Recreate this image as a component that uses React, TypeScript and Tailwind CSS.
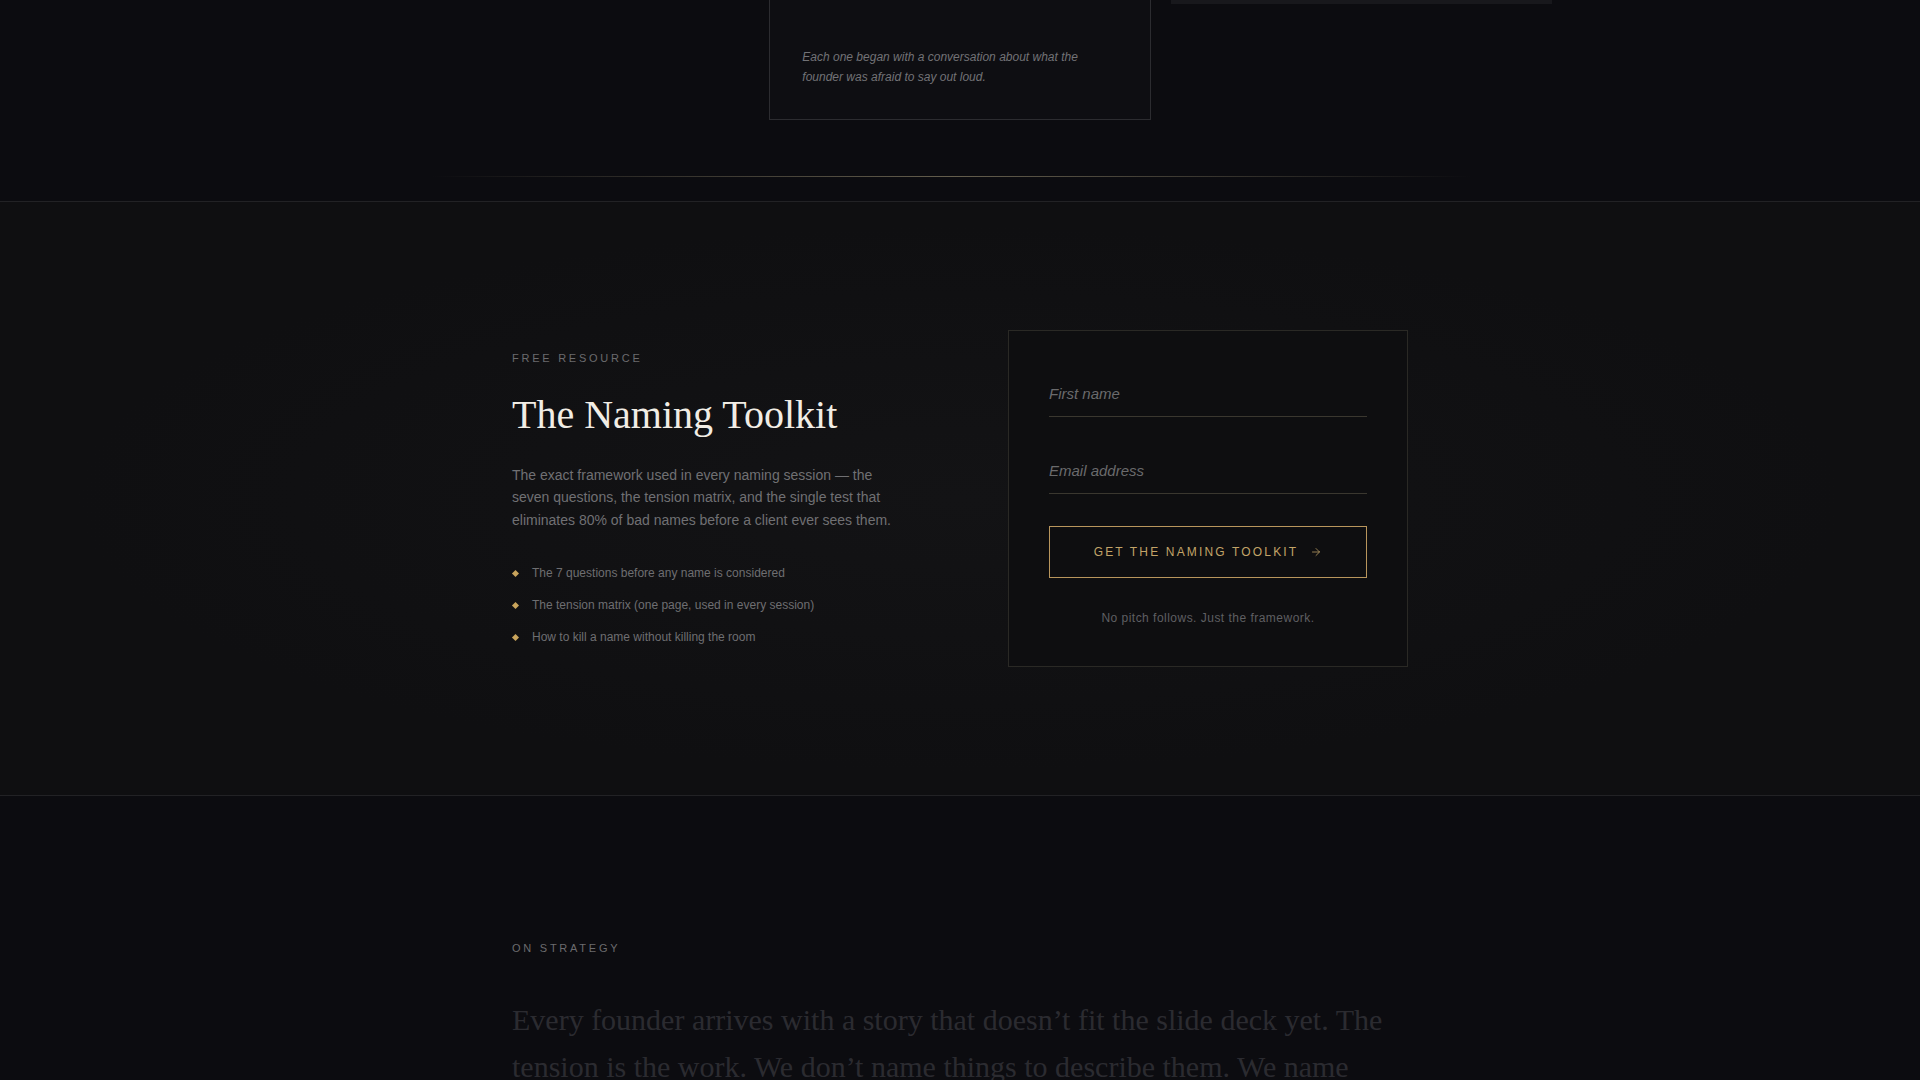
import { ArrowRight } from 'lucide-react';

const toolkitPoints = [
  'The 7 questions before any name is considered',
  'The tension matrix (one page, used in every session)',
  'How to kill a name without killing the room',
];

function Eyebrow({ children }: { children: string }) {
  return (
    <p className="text-[11px] leading-4 uppercase tracking-[0.25em] text-[#6b6b6e]">
      {children}
    </p>
  );
}

function UnderlineInput({ placeholder, type = 'text' }: { placeholder: string; type?: string }) {
  return (
    <input
      type={type}
      placeholder={placeholder}
      className="w-full border-b border-[#3a372f] bg-transparent py-3 text-[15px] leading-5 text-[#ddd8cc] outline-none placeholder:italic placeholder:text-[#6a6a6c]"
    />
  );
}

export default function App() {
  return (
    <div className="min-h-screen bg-[#0c0c10] font-['Liberation_Sans',Arial,sans-serif] text-[#ddd8cc]">
      {/* tail end of the work grid */}
      <section className="px-6 pb-6">
        <div className="mx-auto grid max-w-[1184px] grid-cols-3 gap-5">
          <div />
          <div className="border-x border-b border-[#2c2c30] bg-[#0e0e12] px-8 pb-[32px] pt-[47px]">
            <p className="text-[12px] italic leading-5 text-[#727276]">
              Each one began with a conversation about what the founder was afraid to say out loud.
            </p>
          </div>
          <div>
            <div className="h-1 bg-[#18181c]" />
          </div>
        </div>
        <div className="mx-auto mt-[56px] h-px max-w-[1040px] -translate-x-2 bg-gradient-to-r from-transparent via-[#645e4d] to-transparent" />
      </section>

      {/* lead magnet */}
      <section className="border-y border-[#222225] bg-[radial-gradient(ellipse_at_center,#131315_0%,#0f0f11_65%)] px-6 py-32">
        <div className="mx-auto grid max-w-4xl grid-cols-2 items-center gap-24">
          <div>
            <Eyebrow>Free Resource</Eyebrow>
            <h2 className="mt-6 font-['Liberation_Serif','Times_New_Roman',serif] text-[40px] leading-[50px] text-[#f1ede5]">
              The Naming Toolkit
            </h2>
            <p className="mt-6 text-[14px] leading-[22.5px] text-[#707073]">
              The exact framework used in every naming session — the seven questions, the tension
              matrix, and the single test that eliminates 80% of bad names before a client ever sees
              them.
            </p>
            <ul className="mt-8 space-y-3">
              {toolkitPoints.map((point) => (
                <li key={point} className="flex items-center gap-[14px] text-[12px] leading-5 text-[#6e6e71]">
                  <span className="ml-px h-[5px] w-[5px] shrink-0 rotate-45 bg-[#c9a45c]" />
                  {point}
                </li>
              ))}
            </ul>
          </div>

          <form
            className="flex flex-col gap-8 border border-[#2a2925] bg-[#0e0e10] px-10 pb-[39px] pt-[41px]"
            onSubmit={(e) => e.preventDefault()}
          >
            <UnderlineInput placeholder="First name" />
            <UnderlineInput placeholder="Email address" type="email" />
            <button
              type="submit"
              className="flex items-center justify-center gap-3 border border-[#b8955c] py-4 text-[12px] leading-[18px] uppercase tracking-[0.18em] text-[#c2a468]"
            >
              Get the Naming Toolkit
              <ArrowRight size={12} strokeWidth={1.5} />
            </button>
            <p className="text-center text-[12px] leading-[17px] tracking-[0.04em] text-[#5f5f62]">
              No pitch follows. Just the framework.
            </p>
          </form>
        </div>
      </section>

      {/* essay */}
      <section className="px-6 pb-32 pt-36">
        <div className="mx-auto max-w-4xl">
          <Eyebrow>On Strategy</Eyebrow>
          <p className="mt-10 font-['Liberation_Serif','Times_New_Roman',serif] text-[30px] leading-[47px] text-[#2b2b30]">
            Every founder arrives with a story that doesn’t fit the slide deck yet. The tension is
            the work. We don’t name things to describe them. We name them for what they are
            about to become.
          </p>
        </div>
      </section>
    </div>
  );
}
